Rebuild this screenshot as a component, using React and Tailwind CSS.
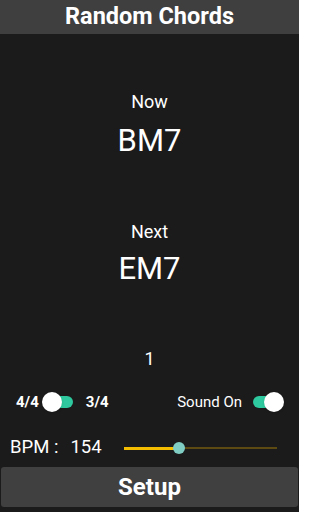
import React from 'react';

function Toggle({ on }) {
    return (
        <div className="relative w-[30px] h-[20px] flex items-center">
            <div className="w-full h-[12px] rounded-full bg-[#2ec99e]" />
            <div
                className={
                    'absolute top-0 w-[20px] h-[20px] rounded-full bg-white shadow ' +
                    (on ? 'right-[-1px]' : 'left-[-1px]')
                }
            />
        </div>
    );
}

export default function App() {
    const bpm = 154;
    const pct = 36;

    return (
        <div className="w-[299px] h-[512px] bg-[#1b1b1b] text-white flex flex-col overflow-hidden" style={{ fontFamily: 'Roboto, "Noto Sans", sans-serif' }}>
            <div className="h-[34px] bg-[#3f3f3f] flex items-center justify-center">
                <span className="text-[23.5px] font-bold leading-none">Random Chords</span>
            </div>

            <div className="flex flex-col items-center">
                <div className="mt-[57px] text-[18px] leading-[22px]">Now</div>
                <div className="mt-[10px] text-[31px] leading-[36px]">BM7</div>
                <div className="mt-[62px] text-[18px] leading-[22px]">Next</div>
                <div className="mt-[8px] text-[31px] leading-[36px]">EM7</div>
                <div className="mt-[61px] text-[18px] leading-[22px]">1</div>
            </div>

            <div className="mt-[22px] h-[20px] flex items-center pl-[16px] pr-[16px]">
                <span className="text-[15px] font-bold">4/4</span>
                <div className="ml-[4px]">
                    <Toggle on={false} />
                </div>
                <span className="ml-[13px] text-[15px] font-bold">3/4</span>
                <span className="ml-auto text-[15px]">Sound On</span>
                <div className="ml-[11px]">
                    <Toggle on={true} />
                </div>
            </div>

            <div className="mt-[24px] h-[24px] flex items-center pl-[10px] pr-[22px]">
                <span className="text-[18.5px]">BPM :</span>
                <span className="ml-[12px] text-[18.5px]">{bpm}</span>
                <div className="ml-[22px] flex-1 relative h-[12px] flex items-center">
                    <div className="w-full h-[2px] bg-[#5c4a12]" />
                    <div className="absolute left-0 h-[3px] bg-[#f4bd00]" style={{ width: pct + '%' }} />
                    <div
                        className="absolute w-[12px] h-[12px] rounded-full bg-[#7fcdc3] -ml-[6px]"
                        style={{ left: pct + '%' }}
                    />
                </div>
            </div>

            <div className="mt-[7px] mx-[1px] h-[40px] rounded-[3px] bg-[#404040] flex items-center justify-center">
                <span className="text-[24px] font-bold">Setup</span>
            </div>
        </div>
    );
}
